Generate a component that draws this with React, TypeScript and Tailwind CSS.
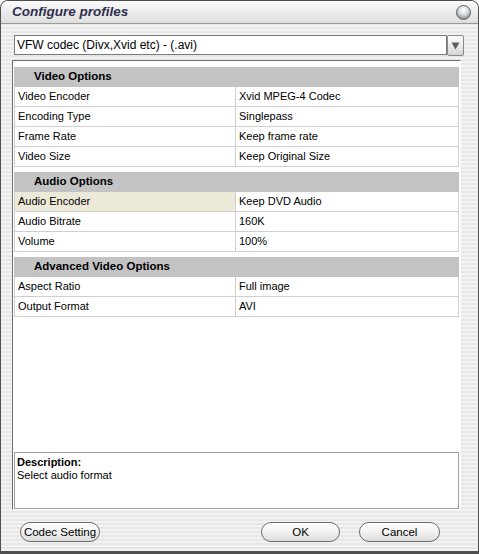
import React from "react";

const stripe =
  "bg-[repeating-linear-gradient(180deg,#f3f3f3_0px,#f3f3f3_2px,#e7e7e7_2px,#e7e7e7_4px)]";

type Row = { k: string; v: string; hl?: boolean };
const sections: { title: string; rows: Row[] }[] = [
  {
    title: "Video Options",
    rows: [
      { k: "Video Encoder", v: "Xvid MPEG-4 Codec" },
      { k: "Encoding Type", v: "Singlepass" },
      { k: "Frame Rate", v: "Keep frame rate" },
      { k: "Video Size", v: "Keep Original Size" },
    ],
  },
  {
    title: "Audio Options",
    rows: [
      { k: "Audio Encoder", v: "Keep DVD Audio", hl: true },
      { k: "Audio Bitrate", v: "160K" },
      { k: "Volume", v: "100%" },
    ],
  },
  {
    title: "Advanced Video Options",
    rows: [
      { k: "Aspect Ratio", v: "Full image" },
      { k: "Output Format", v: "AVI" },
    ],
  },
];

function PillButton({ label, w }: { label: string; w: string }) {
  return (
    <button
      className={`${w} h-[20px] rounded-full border border-[#6a6a6a] bg-[linear-gradient(180deg,#ffffff_0%,#f4f4f4_45%,#dcdcdc_100%)] text-[11.5px] leading-[18px] text-black shadow-[inset_0_1px_0_#fff]`}
      style={{ fontFamily: '"Liberation Sans", Arial, sans-serif' }}
    >
      {label}
    </button>
  );
}

export default function App() {
  return (
    <div
      className={`w-[479px] h-[554px] flex flex-col border border-[#4f4f4f] border-b-[3px] rounded-t-[8px] overflow-hidden ${stripe}`}
      style={{ fontFamily: '"Liberation Sans", Arial, sans-serif' }}
    >
      {/* Title bar */}
      <div className="h-[23px] shrink-0 flex items-center justify-between pl-[11px] pr-[7px] border-b border-[#9a9a9a] bg-[linear-gradient(180deg,#fbfbfb_0%,#ececec_50%,#dedede_100%)]">
        <span className="text-[13.5px] font-bold italic text-[#2e2e4e] leading-none">
          Configure profiles
        </span>
        <span className="w-[15px] h-[15px] rounded-full border border-[#5c5c5c] bg-[radial-gradient(circle_at_50%_30%,#ffffff_0%,#d8dde2_40%,#8a949c_100%)] shadow-[inset_0_-2px_2px_rgba(0,0,0,0.15)]" />
      </div>

      {/* Combo */}
      <div className="mt-[11px] ml-[13px] flex items-start">
        <div className="w-[433px] h-[20px] bg-white border border-[#7a7a7a] flex items-center pl-[2px]">
          <span className="text-[12px] text-black leading-none">
            VFW codec (Divx,Xvid etc) - (.avi)
          </span>
        </div>
        <div className="w-[17px] h-[21px] rounded-[2px] border border-[#8a8a8a] bg-[linear-gradient(180deg,#fdfdfd_0%,#e8e8e8_60%,#d4d4d4_100%)] flex items-center justify-center">
          <svg width="9" height="9" viewBox="0 0 9 9">
            <path d="M0.5 1.5 L8.5 1.5 L4.5 8.5 Z" fill="#5e5e5e" />
          </svg>
        </div>
      </div>

      {/* Panel */}
      <div className="mt-[4px] ml-[11px] w-[449px] h-[450px] bg-white border-l border-t border-[#707070] border-r border-r-white border-b border-b-white flex flex-col">
        <div className="pt-[6px] pl-[1px] flex flex-col gap-[5px]">
          {sections.map((s) => (
            <div key={s.title} className="w-[445px] flex flex-col">
              <div className="h-[20px] bg-[#c3c3c3] flex items-center pl-[20px]">
                <span className="text-[11.5px] font-bold text-black leading-none">
                  {s.title}
                </span>
              </div>
              {s.rows.map((r) => (
                <div
                  key={r.k}
                  className="h-[20px] flex border-l border-r border-b border-[#cfcfcf] text-[11px] text-black leading-none"
                >
                  <div
                    className={`w-[221px] shrink-0 flex items-center pl-[3px] border-r border-[#cfcfcf] ${
                      r.hl ? "bg-[#ece9d8]" : ""
                    }`}
                  >
                    {r.k}
                  </div>
                  <div className="flex-1 flex items-center pl-[3px]">{r.v}</div>
                </div>
              ))}
            </div>
          ))}
        </div>
        <div className="flex-1" />
        <div className="ml-[1px] w-[445px] h-[57px] border border-[#a0a09a] px-[2px] pt-[3px] text-[11px] text-black leading-[13px]">
          <div className="font-bold">Description:</div>
          <div>Select audio format</div>
        </div>
      </div>

      {/* Buttons */}
      <div className="mt-[9px] flex items-start">
        <div className="ml-[19px]">
          <PillButton label="Codec Setting" w="w-[80px]" />
        </div>
        <div className="ml-[161px]">
          <PillButton label="OK" w="w-[79px]" />
        </div>
        <div className="ml-[19px]">
          <PillButton label="Cancel" w="w-[81px]" />
        </div>
      </div>
    </div>
  );
}
